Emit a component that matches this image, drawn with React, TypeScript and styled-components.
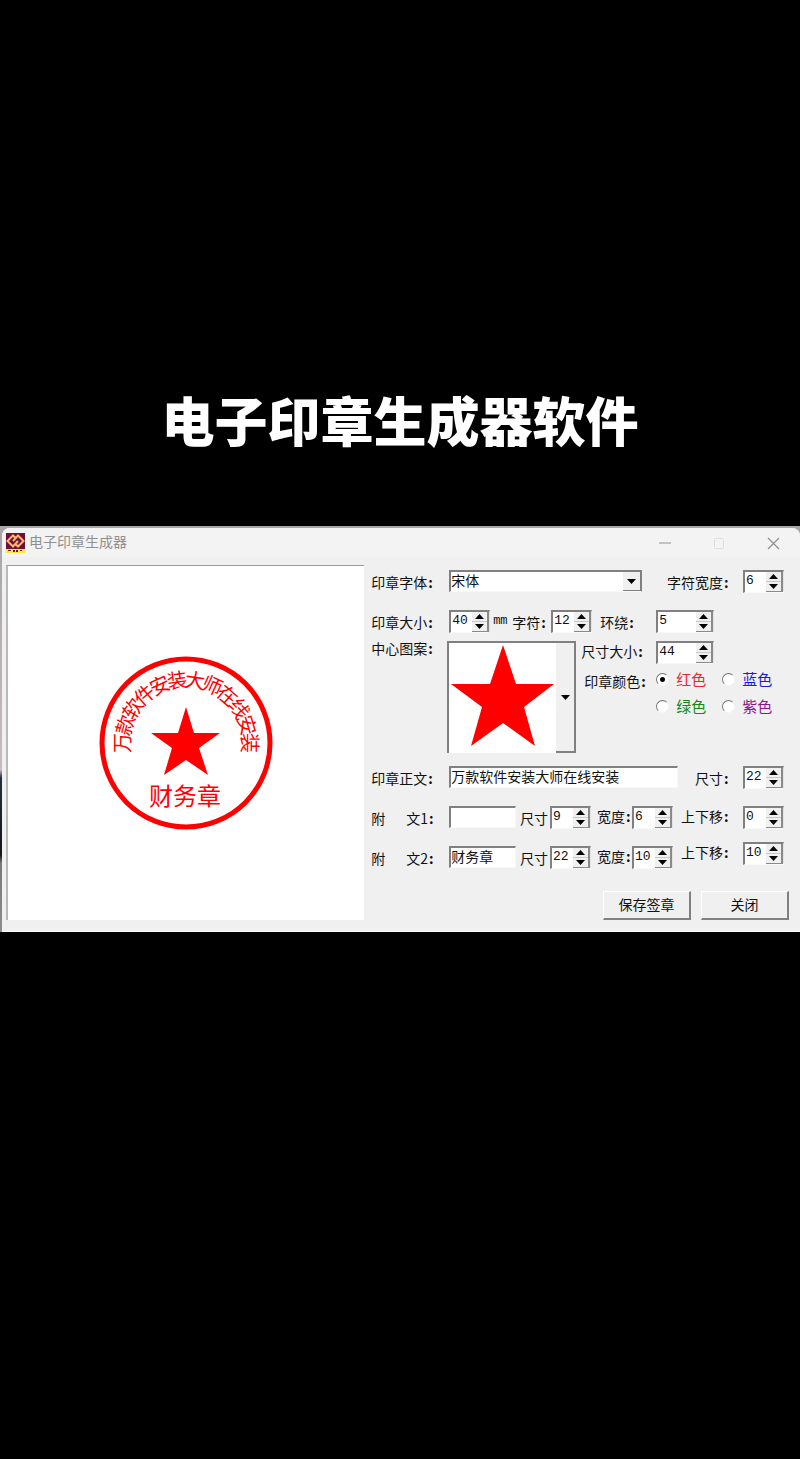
import React, { useState } from "react";
import styled, { createGlobalStyle } from "styled-components";

const GlobalStyle = createGlobalStyle`
  *, *::before, *::after { box-sizing: border-box; }
  body {
    margin: 0;
    background: #000;
    color: #111;
    font-family: "Noto Sans CJK SC", sans-serif;
    font-size: 14px;
    line-height: 20px;
  }
  input, select, button { font: inherit; color: inherit; margin: 0; }
`;

const Page = styled.main`
  min-height: 100vh;
  background: #000;
`;

const Hero = styled.header`
  display: flex;
  align-items: flex-end;
  justify-content: center;
  padding: 379px 16px 67px;
`;

const HeroTitle = styled.h1`
  margin: 0;
  color: #fff;
  font-size: 53px;
  font-weight: 900;
  line-height: 80px;
`;

const Desktop = styled.div`
  padding: 2px 0 0 2px;
  background: linear-gradient(#a9a5a7 0, #c5bcbc 60%, #26303c 62%, #14161b 81%, #77797b 83%, #8d8d8d 100%);
`;

const Window = styled.section`
  background: #f0f0f0;
  border-radius: 8px 8px 0 0;
  border-bottom: 1px solid #fafafa;
`;

const TitleBar = styled.div`
  display: flex;
  align-items: center;
  height: 29px;
  padding: 0 20px 0 4px;
  border-radius: 8px 8px 0 0;
  background: #f3f3f3;
`;

const WindowTitle = styled.h2`
  flex: 1;
  margin: 0 0 0 4px;
  padding-bottom: 3px;
  color: #8f8f8f;
  font-size: 14px;
  font-weight: 400;
`;

const Captions = styled.div`
  display: flex;
  gap: 40px;
`;

const CaptionButton = styled.button<{ $faded?: boolean }>`
  display: flex;
  padding: 0;
  border: 0;
  background: none;
  color: ${(p) => (p.$faded ? "#dedede" : "#8f8f8f")};
`;

const Body = styled.div`
  display: flex;
  padding: 8px 11px 11px 4px;
`;

const Preview = styled.div`
  display: flex;
  flex: 0 0 calc(46% - 2px);
  align-items: center;
  justify-content: center;
  border-top: 1px solid #9c9c9c;
  border-left: 2px solid #b9b9b9;
  background: #fff;
`;

const Form = styled.form`
  flex: 1;
  min-width: 0;
  padding: 4px 0 0 7px;
`;

const Row = styled.div<{ $gap: number; $height?: number }>`
  display: flex;
  align-items: center;
  height: ${(p) => p.$height ?? 24}px;
  margin: 0 5px ${(p) => p.$gap}px 0;
`;

const Group = styled.div<{ $grow?: boolean; $end?: boolean }>`
  display: flex;
  flex: ${(p) => (p.$grow ? "1" : "none")};
  align-items: center;
  align-self: ${(p) => (p.$end ? "flex-end" : "flex-start")};
  min-width: 0;
  height: 24px;
`;

const Label = styled.label<{ $width: number; $indent?: number; $raised?: boolean }>`
  flex: none;
  width: ${(p) => p.$width}px;
  padding-left: ${(p) => p.$indent ?? 0}px;
  padding-top: ${(p) => (p.$raised ? 0 : 2)}px;
  padding-bottom: ${(p) => (p.$raised ? 3 : 0)}px;
  white-space: pre;
`;

const Colon = styled.span`
  padding-left: 1px;
  font-weight: 700;
`;

const Unit = styled.span`
  flex: none;
  width: 22px;
  padding-left: 3px;
  font-family: "Liberation Mono", monospace;
  font-size: 12px;
`;

const WideSpace = styled.span`
  display: inline-block;
  width: 21px;
`;

const TextInput = styled.input`
  flex: 1;
  min-width: 0;
  height: 22px;
  padding: 0 0 3px;
  border: solid;
  border-width: 2px 1px 1px 2px;
  border-color: #808080 #f8f8f8 #f8f8f8 #808080;
  background: #fff;
  line-height: 16px;
  outline: none;
`;

const SelectBox = styled.div`
  position: relative;
  flex: 1;
  min-width: 0;
  height: 22px;
  border: solid;
  border-width: 2px 1px 1px 2px;
  border-color: #808080 #808080 #f8f8f8 #808080;
  background: #fff;
`;

const Select = styled.select`
  display: block;
  width: 100%;
  height: 18px;
  padding: 0 20px 2px 0;
  border: 0;
  appearance: none;
  background: transparent;
  line-height: 16px;
  outline: none;
`;

const SelectArrow = styled.span`
  position: absolute;
  top: 0;
  right: 0;
  bottom: 0;
  display: flex;
  align-items: center;
  justify-content: center;
  width: 18px;
  border-right: 1px solid #808080;
  border-bottom: 1px solid #808080;
  background: #f0f0f0;
  pointer-events: none;
`;

const SpinBox = styled.div<{ $width: number }>`
  display: flex;
  flex: none;
  width: ${(p) => p.$width}px;
  height: 23px;
  border: solid;
  border-width: 2px 1px 1px 2px;
  border-color: #808080 #e4e4e4 #f8f8f8 #808080;
  background: #fff;
`;

const SpinInput = styled.input`
  flex: 1;
  min-width: 0;
  width: 0;
  height: 18px;
  padding: 0 0 0 1px;
  border: 0;
  background: transparent;
  font-family: "Liberation Mono", monospace;
  font-size: 13px;
  outline: none;
`;

const SpinButtons = styled.div`
  display: flex;
  flex-direction: column;
  width: 17px;
  border-right: 2px solid #8a8a8a;
  border-bottom: 1px solid #8a8a8a;
  background: #f0f0f0;
`;

const SpinButton = styled.button`
  display: flex;
  flex: 1;
  align-items: center;
  justify-content: center;
  min-height: 0;
  padding: 0;
  border: 0;
  background: none;

  & + & { border-top: 1px solid #c8c8c8; }
`;

const PatternRow = styled.div`
  display: flex;
  height: 112px;
  margin: 0 5px 12px 0;
`;

const PatternLabel = styled.span`
  flex: none;
  width: 76px;
  line-height: 14px;
`;

const PatternPicker = styled.div`
  display: flex;
  flex: none;
  width: 129px;
  border: solid #808080;
  border-width: 2px 2px 0 2px;
  background: #fff;
`;

const PatternArt = styled.div`
  flex: 1;
  padding-top: 2px;
`;

const PatternButton = styled.button`
  display: flex;
  align-items: center;
  justify-content: center;
  width: 18px;
  padding: 0;
  border: 0;
  border-bottom: 2px solid #808080;
  background: #f0f0f0;
`;

const PatternSide = styled.div`
  flex: 1;
  padding-left: 5px;
`;

const SideLine = styled.div`
  display: flex;
  align-items: center;
  height: 23px;
  margin-bottom: 5px;
`;

const ColorSet = styled.fieldset`
  display: flex;
  min-width: 0;
  margin: 0;
  padding: 0 0 0 3px;
  border: 0;
`;

const ColorCaption = styled.span`
  flex: none;
  width: 72px;
  padding-top: 2px;
`;

const ColorGrid = styled.div`
  display: grid;
  grid-template-columns: 66px auto;
  row-gap: 7px;
`;

const ColorOption = styled.label<{ $color: string }>`
  display: flex;
  align-items: center;
  gap: 7px;
  color: ${(p) => p.$color};
  font-size: 15px;
`;

const Radio = styled.input`
  appearance: none;
  flex: none;
  width: 13px;
  height: 13px;
  border: 1px solid;
  border-color: #777 #f6f6f6 #f6f6f6 #777;
  border-radius: 50%;
  background: #fff;

  &:checked { background: radial-gradient(circle, #000 0 2px, #fff 3px); }
`;

const Actions = styled.div`
  display: flex;
  justify-content: flex-end;
  gap: 10px;
`;

const ActionButton = styled.button`
  width: 88px;
  height: 29px;
  padding: 0 0 2px;
  border: solid;
  border-width: 1px 2px 2px 1px;
  border-color: #fff #808080 #808080 #fff;
  background: #f0f0f0;
`;

const SealText = styled.text`
  fill: #f00;
  font-family: "Noto Sans CJK SC", sans-serif;
  text-anchor: middle;
`;

function Triangle({ up }: { up?: boolean }) {
  return (
    <svg width="9" height="5" viewBox="0 0 9 5" aria-hidden="true">
      <path d={up ? "M4.500 0 9 5H0z" : "M0 0h9L4.500 5z"} fill="#000" />
    </svg>
  );
}

function Spinner({ id, initial, width = 41 }: { id: string; initial: number; width?: number }) {
  const [value, setValue] = useState(String(initial));
  const step = (by: number) => setValue(String((Number(value) || 0) + by));
  return (
    <SpinBox $width={width}>
      <SpinInput id={id} value={value} onChange={(e) => setValue(e.target.value)} />
      <SpinButtons>
        <SpinButton type="button" aria-label="增加" onClick={() => step(1)}><Triangle up /></SpinButton>
        <SpinButton type="button" aria-label="减少" onClick={() => step(-1)}><Triangle /></SpinButton>
      </SpinButtons>
    </SpinBox>
  );
}

function AppIcon() {
  return (
    <svg width="19" height="20" viewBox="0 0 19 20" aria-hidden="true">
      <path d="M0 0h19v16H0z" fill="#6b1038" />
      <path d="M0 16h19v4H0z" fill="#ffe14a" />
      <path d="M9.500 5 7 2.500 1.500 8 7 13.500l5-5.500M9.500 11l2.500 2.500L17.500 8 12 2.500 7 8" fill="none" stroke="#ffb56a" strokeWidth="2" />
      <path d="M2 17h3v1H2zM7 17h2v2H7zM10 17h2v2h-2zM14 17h2v1h-2z" fill="#59202b" />
    </svg>
  );
}

function Seal({ text, bottom }: { text: string; bottom: string }) {
  const chars = Array.from(text);
  const stepAngle = chars.length > 1 ? 180 / (chars.length - 1) : 0;
  return (
    <svg width="174" height="174" viewBox="0 0 174 174" role="img" aria-label="印章预览">
      <circle cx="87" cy="87" r="84" fill="none" stroke="#f00" strokeWidth="5" />
      {chars.map((char, i) => (
        <SealText key={i} x="87" y="31" fontSize="20" transform={`rotate(${-90 + i * stepAngle} 87 87)`}>
          {char}
        </SealText>
      ))}
      <path d="M87 51l8 26h26L100 92l9 27-22-15-22 15 8-27-21-15h27z" fill="#f00" />
      <SealText x="86" y="149" fontSize="24">{bottom}</SealText>
    </svg>
  );
}

const COLORS = [
  { name: "红色", color: "#e8282c" },
  { name: "蓝色", color: "#1a1ae0" },
  { name: "绿色", color: "#128a18" },
  { name: "紫色", color: "#8a188e" },
];

export default function App() {
  const [mainText, setMainText] = useState("万款软件安装大师在线安装");
  const [first, setFirst] = useState("");
  const [second, setSecond] = useState("财务章");
  const [color, setColor] = useState("红色");

  return (
    <Page lang="zh-CN">
      <GlobalStyle />
      <Hero>
        <HeroTitle>电子印章生成器软件</HeroTitle>
      </Hero>
      <Desktop>
        <Window>
          <TitleBar>
            <AppIcon />
            <WindowTitle>电子印章生成器</WindowTitle>
            <Captions>
              <CaptionButton type="button" aria-label="最小化">
                <svg width="14" height="14" viewBox="0 0 14 14"><path d="M1 7h12" stroke="currentColor" /></svg>
              </CaptionButton>
              <CaptionButton type="button" aria-label="最大化" $faded>
                <svg width="14" height="14" viewBox="0 0 14 14"><rect x="2.500" y="2.500" width="9" height="10" rx="1" fill="none" stroke="currentColor" /></svg>
              </CaptionButton>
              <CaptionButton type="button" aria-label="关闭窗口">
                <svg width="14" height="14" viewBox="0 0 14 14"><path d="M2 2l11 11M13 2 2 13" stroke="currentColor" strokeWidth="1.200" /></svg>
              </CaptionButton>
            </Captions>
          </TitleBar>
          <Body>
            <Preview>
              <Seal text={mainText} bottom={second} />
            </Preview>
            <Form onSubmit={(e) => e.preventDefault()}>
              <Row $gap={16}>
                <Label htmlFor="font" $width={78}>印章字体<Colon>:</Colon></Label>
                <SelectBox>
                  <Select id="font" defaultValue="宋体">
                    <option>宋体</option>
                  </Select>
                  <SelectArrow><Triangle /></SelectArrow>
                </SelectBox>
                <Label htmlFor="char-width" $width={101} $indent={25}>字符宽度<Colon>:</Colon></Label>
                <Spinner id="char-width" initial={6} />
              </Row>
              <Row $gap={8}>
                <Label htmlFor="seal-size" $width={78}>印章大小<Colon>:</Colon></Label>
                <Spinner id="seal-size" initial={40} />
                <Unit>mm</Unit>
                <Label htmlFor="char-size" $width={39}>字符<Colon>:</Colon></Label>
                <Spinner id="char-size" initial={12} />
                <Label htmlFor="wrap" $width={64} $indent={8}>环绕<Colon>:</Colon></Label>
                <Spinner id="wrap" initial={5} width={58} />
              </Row>
              <PatternRow>
                <PatternLabel>中心图案<Colon>:</Colon></PatternLabel>
                <PatternPicker>
                  <PatternArt>
                    <svg width="106" height="104" viewBox="0 0 106 104" role="img" aria-label="五角星">
                      <path d="M54 0l13 39h38L75 62l11 39-32-23-32 23 11-39L2 39h39z" fill="#f00" />
                    </svg>
                  </PatternArt>
                  <PatternButton type="button" aria-label="选择中心图案"><Triangle /></PatternButton>
                </PatternPicker>
                <PatternSide>
                  <SideLine>
                    <Label htmlFor="pattern-size" $width={75} $raised>尺寸大小<Colon>:</Colon></Label>
                    <Spinner id="pattern-size" initial={44} width={58} />
                  </SideLine>
                  <ColorSet aria-label="印章颜色">
                    <ColorCaption>印章颜色<Colon>:</Colon></ColorCaption>
                    <ColorGrid>
                      {COLORS.map((c) => (
                        <ColorOption key={c.name} $color={c.color}>
                          <Radio type="radio" name="color" checked={color === c.name} onChange={() => setColor(c.name)} />
                          {c.name}
                        </ColorOption>
                      ))}
                    </ColorGrid>
                  </ColorSet>
                </PatternSide>
              </PatternRow>
              <Row $gap={16}>
                <Label htmlFor="main-text" $width={78}>印章正文<Colon>:</Colon></Label>
                <TextInput id="main-text" value={mainText} onChange={(e) => setMainText(e.target.value)} />
                <Label htmlFor="main-size" $width={65} $indent={17}>尺寸<Colon>:</Colon></Label>
                <Spinner id="main-size" initial={22} />
              </Row>
              <Row $gap={12}>
                <Label htmlFor="text-1" $width={78}>附<WideSpace />文1<Colon>:</Colon></Label>
                <TextInput id="text-1" value={first} onChange={(e) => setFirst(e.target.value)} />
                <Label htmlFor="size-1" $width={34} $indent={4}>尺寸</Label>
                <Spinner id="size-1" initial={9} />
                <Label htmlFor="width-1" $width={41} $indent={6} $raised>宽度<Colon>:</Colon></Label>
                <Spinner id="width-1" initial={6} />
                <Label htmlFor="shift-1" $width={70} $indent={8} $raised>上下移<Colon>:</Colon></Label>
                <Spinner id="shift-1" initial={0} />
              </Row>
              <Row $gap={22} $height={28}>
                <Group $grow $end>
                  <Label htmlFor="text-2" $width={78}>附<WideSpace />文2<Colon>:</Colon></Label>
                  <TextInput id="text-2" value={second} onChange={(e) => setSecond(e.target.value)} />
                  <Label htmlFor="size-2" $width={34} $indent={4}>尺寸</Label>
                  <Spinner id="size-2" initial={22} />
                  <Label htmlFor="width-2" $width={41} $indent={6} $raised>宽度<Colon>:</Colon></Label>
                  <Spinner id="width-2" initial={10} />
                </Group>
                <Group>
                  <Label htmlFor="shift-2" $width={70} $indent={8} $raised>上下移<Colon>:</Colon></Label>
                  <Spinner id="shift-2" initial={10} />
                </Group>
              </Row>
              <Actions>
                <ActionButton type="submit">保存签章</ActionButton>
                <ActionButton type="button">关闭</ActionButton>
              </Actions>
            </Form>
          </Body>
        </Window>
      </Desktop>
    </Page>
  );
}
